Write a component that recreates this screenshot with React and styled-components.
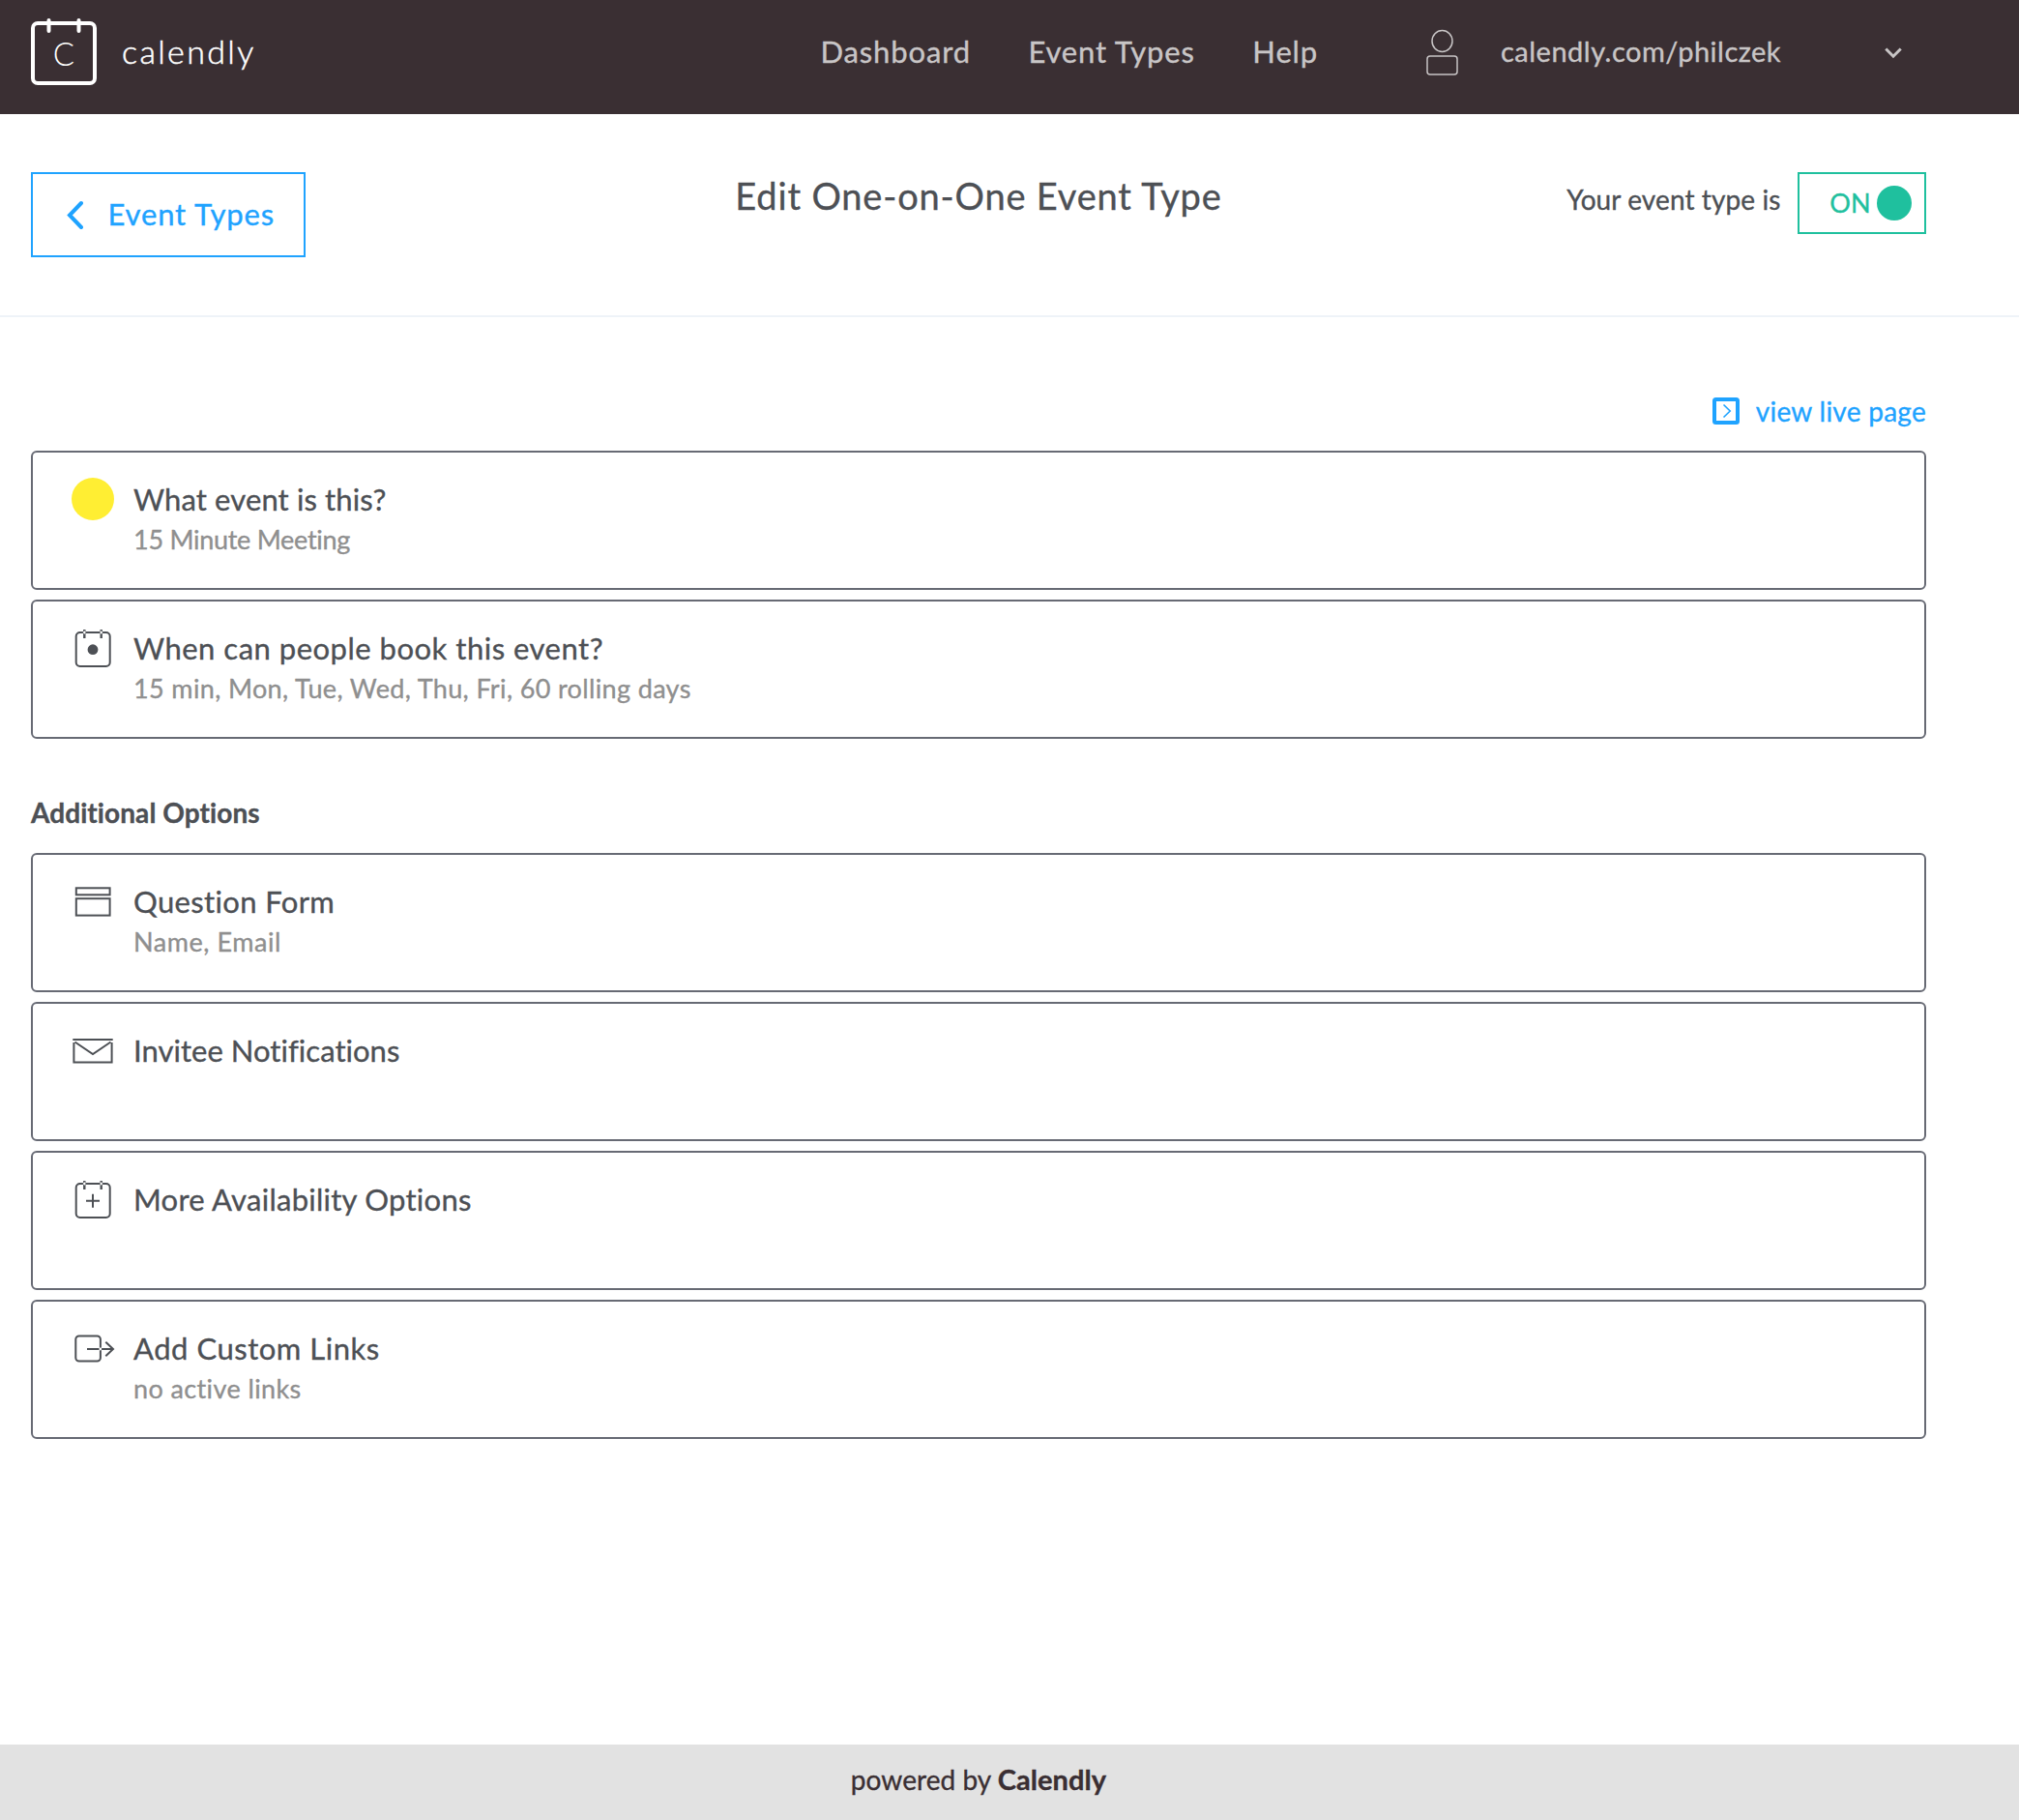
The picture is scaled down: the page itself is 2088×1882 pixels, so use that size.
import React from 'react';
import styled, { createGlobalStyle } from 'styled-components';

const colors = {
  bar: '#3a2f33',
  barText: '#c8c5c6',
  ink: '#4d5055',
  muted: '#8f8f8f',
  blue: '#1fa3ff',
  green: '#1fc09e',
  border: '#676a74',
};

const GlobalStyle = createGlobalStyle`
  * { box-sizing: border-box; }
  body {
    margin: 0;
    background: #fff;
    color: ${colors.ink};
    font-family: Lato, "Open Sans", sans-serif;
    font-variant-ligatures: none;
    -webkit-text-stroke: 0.35px;
  }
`;

const Page = styled.div`
  display: flex;
  flex-direction: column;
  min-height: 1882px;
`;

const TopBar = styled.header`
  display: flex;
  align-items: center;
  height: 118px;
  padding: 0 96px 13px 32px;
  background: ${colors.bar};
  color: ${colors.barText};
`;

const Brand = styled.a`
  display: flex;
  align-items: center;
  gap: 26px;
  color: #fff;
`;

const BrandName = styled.span`
  font-size: 34px;
  font-weight: 300;
  line-height: 40px;
  letter-spacing: 2.35px;
  -webkit-text-stroke: 0.5px #fff;
`;

const Nav = styled.nav`
  display: flex;
  gap: 59.5px;
  margin-left: auto;
`;

const NavLink = styled.a`
  font-size: 31px;
  line-height: 36px;
  letter-spacing: 0.85px;
`;

const Account = styled.div`
  display: flex;
  align-items: center;
  width: 517px;
  margin-left: 112px;
`;

const AccountUrl = styled.span`
  margin-left: 43px;
  font-size: 29px;
  line-height: 36px;
  letter-spacing: 0.5px;
`;

const CaretIcon = styled.svg`
  margin-left: auto;
  margin-right: 25px;
  margin-top: 4px;
`;

const PageHeader = styled.section`
  display: grid;
  grid-template-columns: 1fr auto 1fr;
  align-items: start;
  height: 210px;
  padding: 60px 96px 0 32px;
  border-bottom: 2px solid #eef3f8;
`;

const BackButton = styled.a`
  display: flex;
  align-items: center;
  justify-self: start;
  gap: 25.5px;
  width: 284px;
  height: 88px;
  padding-left: 35px;
  border: 2px solid ${colors.blue};
  color: ${colors.blue};
  font-size: 31px;
  line-height: 36px;
  letter-spacing: 0.85px;
`;

const BackLabel = styled.span`
  padding-bottom: 2px;
`;

const Title = styled.h1`
  margin: 0;
  font-size: 38px;
  font-weight: 400;
  line-height: 48px;
  letter-spacing: 0.83px;
`;

const Status = styled.div`
  display: flex;
  justify-self: end;
  gap: 17.5px;
  font-size: 28px;
  line-height: 56px;
  letter-spacing: 0.1px;
`;

const Toggle = styled.button`
  display: flex;
  align-items: center;
  justify-content: flex-end;
  gap: 6.5px;
  width: 133px;
  height: 64px;
  padding: 0 13px 0 0;
  border: 2px solid ${colors.green};
  background: none;
  color: ${colors.green};
  font: 400 27px/60px Lato, "Open Sans", sans-serif;
  -webkit-text-stroke: 0.35px;
`;

const Knob = styled.span`
  width: 36px;
  height: 36px;
  border-radius: 50%;
  background: ${colors.green};
`;

const Main = styled.main`
  display: flex;
  flex-direction: column;
  flex: 1;
  padding: 75px 96px 0 32px;
`;

const LiveLink = styled.a`
  display: flex;
  align-items: center;
  align-self: flex-end;
  gap: 17px;
  height: 44px;
  margin-bottom: 19px;
  color: ${colors.blue};
  font-size: 28px;
  line-height: 34px;
  letter-spacing: 0.27px;
`;

const LiveLabel = styled.span`
  padding-bottom: 1px;
`;

const SectionTitle = styled.h2`
  margin: 55px 0 21px;
  font-size: 28px;
  font-weight: 700;
  line-height: 42px;
  letter-spacing: 0.08px;
`;

const CardList = styled.div`
  display: flex;
  flex-direction: column;
  gap: 10px;
`;

const Card = styled.article`
  display: flex;
  align-items: flex-start;
  gap: 20px;
  height: 144px;
  padding: 26px 40px;
  border: 2px solid ${colors.border};
  border-radius: 6px;
`;

const CardIcon = styled.svg`
  flex: none;
  width: 44px;
  height: 44px;
  overflow: visible;
  fill: none;
  stroke: ${colors.ink};
  stroke-width: 2;
`;

const CardText = styled.div`
  padding-top: 2px;
`;

const CardTitle = styled.h3`
  margin: 0;
  font-size: 31px;
  font-weight: 400;
  line-height: 40px;
  letter-spacing: ${(p) => p.$tracking}px;
`;

const CardNote = styled.p`
  margin: 0;
  color: ${colors.muted};
  font-size: 27px;
  line-height: 44px;
  letter-spacing: ${(p) => p.$tracking}px;
`;

const Footer = styled.footer`
  height: 78px;
  padding-right: 64px;
  background: #e2e2e2;
  color: ${colors.bar};
  font-size: 28px;
  line-height: 72px;
  letter-spacing: 0.05px;
  text-align: center;
`;

const Strong = styled.strong`
  font-size: 29px;
  font-weight: 700;
`;

const LogoMark = () => (
  <svg width="68" height="72" viewBox="0 0 68 72" fill="none" stroke="#fff" strokeWidth="4" strokeLinecap="round">
    <rect x="2" y="7" width="64" height="62" rx="5" />
    <path d="M18.5 4V15M49.5 4V15" />
    <text x="34" y="51" fill="#fff" stroke="none" fontFamily="Lato" fontWeight="300" fontSize="33" textAnchor="middle">C</text>
  </svg>
);

const UserGlyph = styled.svg`
  margin-top: 4px;
`;

const UserIcon = () => (
  <UserGlyph width="34" height="50" viewBox="0 0 34 50" fill="none" stroke={colors.barText} strokeWidth="1.5">
    <ellipse cx="16.5" cy="12.5" rx="10.5" ry="11" />
    <rect x="1" y="28" width="31" height="19" rx="3" />
  </UserGlyph>
);

const CalendarFrame = () => (
  <>
    <rect x="4.7" y="6" width="35" height="35" rx="4" />
    <path d="M13.3 3V12M30.7 3V12" strokeWidth="2.4" />
    <path d="M11.7 6L13.3 4.2L14.9 6L13.3 7.8ZM29.1 6L30.7 4.2L32.3 6L30.7 7.8Z" fill="#fff" stroke="none" />
  </>
);

const icons = {
  color: <circle cx="22" cy="22" r="22" fill="#ffee33" stroke="none" />,
  calendar: (
    <>
      <CalendarFrame />
      <circle cx="22" cy="23.7" r="5.4" fill={colors.ink} stroke="none" />
    </>
  ),
  form: (
    <>
      <rect x="4.8" y="8.3" width="34.8" height="7" />
      <rect x="4.8" y="19.2" width="34.8" height="17.4" />
    </>
  ),
  mail: (
    <>
      <path d="M1.3 11H42.7" />
      <path d="M2.4 14V34.6H41.6V14M3.5 13.5L22 26L40.5 13.5" />
    </>
  ),
  calendarPlus: (
    <>
      <CalendarFrame />
      <path d="M15 23.7H29M22 16.7V30.7" />
    </>
  ),
  link: (
    <>
      <rect x="4.3" y="9.5" width="25.6" height="26" rx="3.5" />
      <path d="M16 23H43M35.3 15.8L43 23L35.3 30.2" />
      <circle cx="29.8" cy="23" r="1.4" fill="#fff" stroke="none" />
    </>
  ),
};

const mainCards = [
  { icon: 'color', title: 'What event is this?', note: '15 Minute Meeting', titleTracking: 0.12, noteTracking: -0.28 },
  {
    icon: 'calendar',
    title: 'When can people book this event?',
    note: '15 min, Mon, Tue, Wed, Thu, Fri, 60 rolling days',
    titleTracking: 0.5,
    noteTracking: 0.36,
  },
];

const optionCards = [
  { icon: 'form', title: 'Question Form', note: 'Name, Email', titleTracking: 0.35, noteTracking: 0.55 },
  { icon: 'mail', title: 'Invitee Notifications', titleTracking: 0.03 },
  { icon: 'calendarPlus', title: 'More Availability Options', titleTracking: 0.26 },
  { icon: 'link', title: 'Add Custom Links', note: 'no active links', titleTracking: 0.53, noteTracking: 0.39 },
];

const EventCard = ({ icon, title, note, titleTracking, noteTracking }) => (
  <Card>
    <CardIcon viewBox="0 0 44 44">{icons[icon]}</CardIcon>
    <CardText>
      <CardTitle $tracking={titleTracking}>{title}</CardTitle>
      {note && <CardNote $tracking={noteTracking}>{note}</CardNote>}
    </CardText>
  </Card>
);

export default function App() {
  return (
    <Page>
      <GlobalStyle />
      <TopBar>
        <Brand>
          <LogoMark />
          <BrandName>calendly</BrandName>
        </Brand>
        <Nav>
          <NavLink>Dashboard</NavLink>
          <NavLink>Event Types</NavLink>
          <NavLink>Help</NavLink>
        </Nav>
        <Account>
          <UserIcon />
          <AccountUrl>calendly.com/philczek</AccountUrl>
          <CaretIcon width="18" height="12" viewBox="0 0 18 12" fill="none" stroke={colors.barText} strokeWidth="3">
            <path d="M1.3 1.5L9 9.2L16.7 1.5" />
          </CaretIcon>
        </Account>
      </TopBar>
      <PageHeader>
        <BackButton>
          <svg width="17" height="30" viewBox="0 0 17 30" fill="none" stroke={colors.blue} strokeWidth="4" strokeLinecap="round">
            <path d="M15 3L3 15.5L15 28" />
          </svg>
          <BackLabel>Event Types</BackLabel>
        </BackButton>
        <Title>Edit One-on-One Event Type</Title>
        <Status>
          Your event type is
          <Toggle>
            ON
            <Knob />
          </Toggle>
        </Status>
      </PageHeader>
      <Main>
        <LiveLink>
          <svg width="28" height="28" viewBox="0 0 28 28" fill="none" stroke={colors.blue}>
            <rect x="2" y="2" width="24" height="24" rx="1.5" strokeWidth="4" />
            <path d="M11.5 7.5L18.2 14L11.5 20.5" strokeWidth="1.6" />
          </svg>
          <LiveLabel>view live page</LiveLabel>
        </LiveLink>
        <CardList>
          {mainCards.map((card) => (
            <EventCard key={card.title} {...card} />
          ))}
        </CardList>
        <SectionTitle>Additional Options</SectionTitle>
        <CardList>
          {optionCards.map((card) => (
            <EventCard key={card.title} {...card} />
          ))}
        </CardList>
      </Main>
      <Footer>
        powered by <Strong>Calendly</Strong>
      </Footer>
    </Page>
  );
}
